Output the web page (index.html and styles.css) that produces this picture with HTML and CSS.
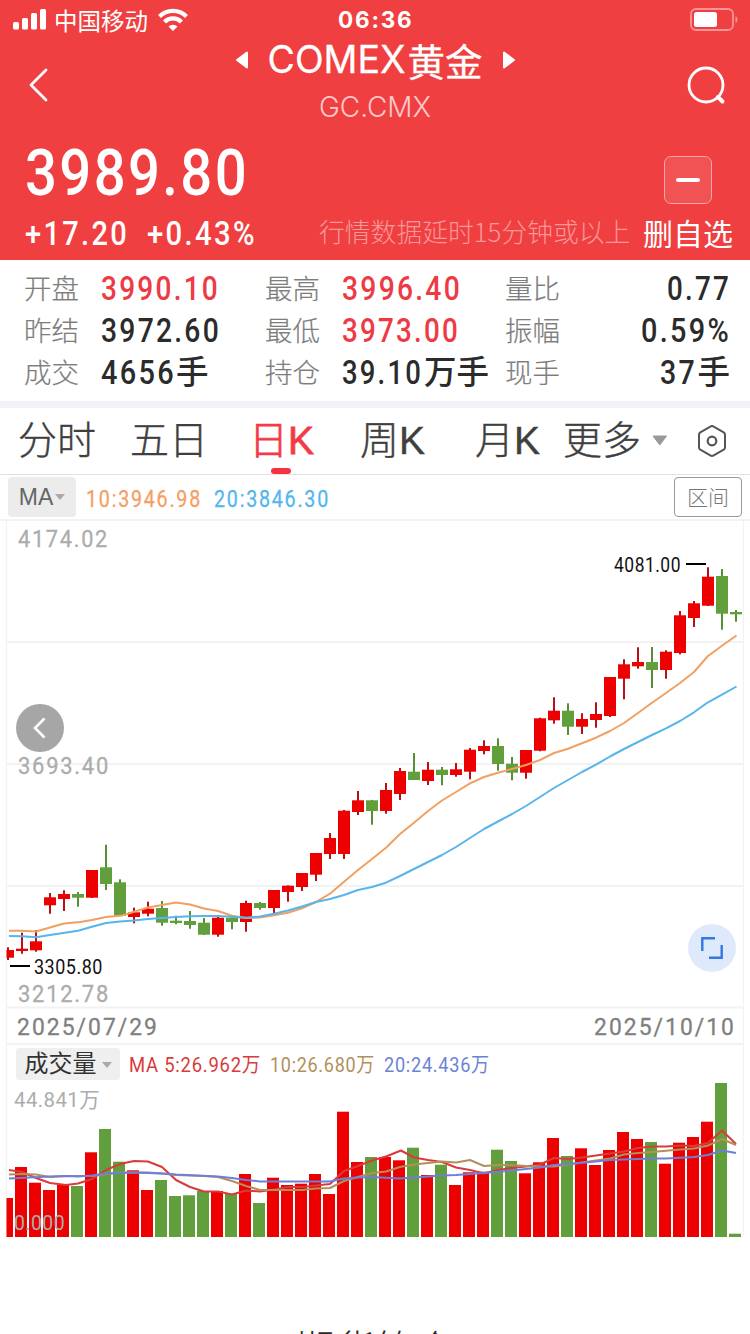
FILE: index.html
```html
<!DOCTYPE html>
<html lang="zh-CN">
<head>
<meta charset="utf-8">
<title>COMEX黄金</title>
<link rel="stylesheet" href="styles.css">
</head>
<body>
<header class="head">
  <div class="status">
    <svg class="signal" width="34" height="22"><rect x="0" y="13" width="6" height="7.500" rx="1.500"/><rect x="9" y="9" width="6" height="11.500" rx="1.500"/><rect x="18" y="4" width="6" height="16.500" rx="1.500"/><rect x="27" y="0" width="6" height="20.500" rx="1.500"/></svg>
    <span class="carrier">中国移动</span>
    <svg class="wifi" width="30" height="22" viewBox="0 0 30 22"><g fill="none" stroke="#fff" stroke-width="4.200"><path d="M1.500 7.500a19 19 0 0 1 27 0"/><path d="M6.500 13a12 12 0 0 1 17 0"/></g><path d="M10.500 17.500a6.500 6.500 0 0 1 9 0l-4.500 4.500z" fill="#fff"/></svg>
    <span class="clock">06:36</span>
    <svg class="battery" width="49" height="24"><rect x="1" y="1" width="42" height="21" rx="5" fill="none" stroke="#fff" stroke-opacity=".45" stroke-width="1.800"/><rect x="4" y="4" width="23" height="15" rx="2.500" fill="#fff"/><path d="M45.500 8v7q2-1 2-3.500t-2-3.500z" fill="#fff" fill-opacity=".45"/></svg>
  </div>
  <div class="nav">
    <svg class="back" width="20" height="34"><path d="M17 2L2 17l15 15" fill="none" stroke="#fff" stroke-width="2.800" stroke-linecap="round" stroke-linejoin="round"/></svg>
    <div class="names">
      <div class="title">
        <svg width="14" height="20"><path d="M12 2.500v15L2 10z" class="tri"/></svg>
        <span class="name"><span class="latin">COMEX</span>黄金</span>
        <svg width="14" height="20"><path d="M2 2.500v15l10-7.500z" class="tri"/></svg>
      </div>
      <div class="code">GC.CMX</div>
    </div>
    <svg class="search" width="40" height="42"><circle cx="19" cy="20" r="17" /><path d="M31 32l4.500 4.500"/></svg>
  </div>
  <div class="quote">
    <svg class="num" width="222" height="60"><text x="0" y="54.500" textLength="224" lengthAdjust="spacingAndGlyphs" class="price">3989.80</text></svg>
    <div class="minus"><i></i></div>
  </div>
  <div class="change">
    <svg class="num" width="103" height="40"><text y="32" textLength="104" lengthAdjust="spacingAndGlyphs">+17.20</text></svg>
    <svg class="num pct" width="110" height="40"><text y="32" textLength="110" lengthAdjust="spacingAndGlyphs">+0.43%</text></svg>
    <span class="delay">行情数据延时15分钟或以上</span>
    <span class="remove">删自选</span>
  </div>
</header>

<section class="stats">
  <span class="lab">开盘</span><svg class="num up" width="119" height="42"><text y="33" textLength="119" lengthAdjust="spacingAndGlyphs">3990.10</text></svg>
  <span class="lab">最高</span><svg class="num up" width="120" height="42"><text y="33" textLength="120" lengthAdjust="spacingAndGlyphs">3996.40</text></svg>
  <span class="lab">量比</span><div class="right"><svg class="num" width="63" height="42"><text y="33" textLength="64" lengthAdjust="spacingAndGlyphs">0.77</text></svg></div>
  <span class="lab">昨结</span><svg class="num" width="120" height="42"><text y="33" textLength="120" lengthAdjust="spacingAndGlyphs">3972.60</text></svg>
  <span class="lab">最低</span><svg class="num up" width="118" height="42"><text y="33" textLength="118" lengthAdjust="spacingAndGlyphs">3973.00</text></svg>
  <span class="lab">振幅</span><div class="right"><svg class="num" width="89" height="42"><text y="33" textLength="90" lengthAdjust="spacingAndGlyphs">0.59%</text></svg></div>
  <span class="lab">成交</span><div class="mix"><svg class="num" width="75" height="42"><text y="33" textLength="75" lengthAdjust="spacingAndGlyphs">4656</text></svg><b>手</b></div>
  <span class="lab">持仓</span><div class="mix"><svg class="num" width="82" height="42"><text y="33" textLength="81" lengthAdjust="spacingAndGlyphs">39.10</text></svg><b>万手</b></div>
  <span class="lab">现手</span><div class="right mix"><svg class="num" width="37" height="42"><text y="33" textLength="37" lengthAdjust="spacingAndGlyphs">37</text></svg><b>手</b></div>
</section>

<nav class="tabs">
  <span>分时</span><span>五日</span><span class="on">日K</span><span>周K</span><span>月K</span><span>更多</span>
  <svg width="16" height="12"><path d="M1 1h13.500L7.800 10z" fill="#999" stroke="#999" stroke-linejoin="round"/></svg>
  <svg width="32" height="34"><path d="M14.300 2.600q1.700-1 3.400 0l10 5.800q1.300.8 1.300 2.400v12.400q0 1.600-1.300 2.400l-10 5.800q-1.700 1-3.400 0l-10-5.800Q3 24.800 3 23.200V10.800q0-1.600 1.300-2.400z" fill="none" stroke="#555" stroke-width="2"/><circle cx="16" cy="17" r="4.300" fill="none" stroke="#555" stroke-width="2.200"/></svg>
</nav>

<section class="tools">
  <div class="pill">MA<svg width="10" height="6"><path d="M0 0h10L5 6z" fill="#aaa"/></svg></div>
  <svg class="num s o" width="116" height="40"><text y="30" textLength="116" lengthAdjust="spacingAndGlyphs">10:3946.98</text></svg>
  <svg class="num s b" width="116" height="40"><text y="30" textLength="116" lengthAdjust="spacingAndGlyphs">20:3846.30</text></svg>
  <div class="range">区间</div>
</section>

<section class="kline"><svg id="kline" width="750" height="487" viewBox="0 521 750 487"></svg></section>

<section class="dates">
  <svg class="num s d" width="142" height="34"><text y="27" textLength="142" lengthAdjust="spacingAndGlyphs">2025/07/29</text></svg>
  <svg class="num s d" width="142" height="34"><text y="27" textLength="142" lengthAdjust="spacingAndGlyphs">2025/10/10</text></svg>
</section>

<section class="volhead">
  <div class="pill vol">成交量<svg width="10" height="6"><path d="M0 0h10L5 6z" fill="#aaa"/></svg></div>
  <svg class="num t ma5" width="132" height="34"><text y="24" textLength="132" lengthAdjust="spacingAndGlyphs">MA 5:26.962万</text></svg>
  <svg class="num t ma10" width="105" height="34"><text y="24" textLength="105" lengthAdjust="spacingAndGlyphs">10:26.680万</text></svg>
  <svg class="num t ma20" width="106" height="34"><text y="24" textLength="106" lengthAdjust="spacingAndGlyphs">20:24.436万</text></svg>
</section>

<section class="volume"><svg id="volume" width="750" height="160" viewBox="0 1080 750 160"></svg></section>
<footer class="foot">期货简介</footer>
<script src="chart.js"></script>
</body>
</html>
```
FILE: styles.css
```css
* { box-sizing: border-box; }
html, body { margin: 0; height: 1334px; overflow: hidden; }
body { background: #fff; font-family: "Liberation Sans", "Noto Sans CJK SC", sans-serif; color: #2b2b2b; width: 750px; }
svg { display: block; flex: none; overflow: visible; }

.head { background: #f03f41; color: #fff; height: 260px; }
.status { display: flex; height: 40px; padding-left: 13px; }
.signal { margin-top: 9px; fill: #fff; }
.carrier { font: 400 23.500px/40px "Noto Sans CJK SC", sans-serif; margin-left: 7px; width: 96px; white-space: nowrap; }
.wifi { margin: 9px 0 0 8px; }
.clock { font: 700 22.500px/40px Inter, sans-serif; margin-left: 150px; width: 77px; letter-spacing: 1.800px; white-space: nowrap; }
.battery { margin: 8px 0 0 275px; }
.nav { display: flex; height: 90px; padding: 0 25px 0 29px; justify-content: space-between; }
.back { margin-top: 28px; }
.names { width: 500px; margin-left: 26px; }
.title { display: flex; align-items: center; justify-content: center; height: 40px; gap: 19px; margin-right: 12px; }
.tri { fill: #fff; stroke: #fff; stroke-width: 2; stroke-linejoin: round; }
.name { font: 400 37.500px/37px "Noto Sans CJK SC", sans-serif; white-space: nowrap; display: flex; -webkit-text-stroke: .3px currentColor; }
.latin { font: 400 37.500px/38px Inter, sans-serif; width: 140px; }
.code { font: 300 28px/54px Inter, sans-serif; text-align: center; margin-right: 12px; color: #fbc9c9; }
.search { margin-top: 25px; margin-right: -2px; fill: none; stroke: #fff; stroke-width: 2.800; stroke-linecap: round; }
.search path { stroke-width: 4; }
.num { font: 500 34px Roboto, "Noto Sans CJK SC", sans-serif; fill: currentColor; letter-spacing: .08em; white-space: pre; }
.quote { display: flex; justify-content: space-between; height: 80px; padding: 10px 38px 0 25px; }
.num .price { font-size: 64px; }
.minus { width: 48px; height: 48px; margin-top: 16px; border: 1px solid #f8a6a7; border-radius: 7px; background: #f15355; display: flex; align-items: center; justify-content: center; }
.minus i { width: 24px; height: 3.500px; border-radius: 2px; background: #fff; }
.change { display: flex; height: 50px; padding-left: 25px; }
.change .num { margin-top: 3px; }
.change .pct { margin-left: 19px; }
.delay { font: 300 25.800px/41px "Noto Sans CJK SC", sans-serif; color: #f79899; margin-left: 62px; width: 311px; white-space: nowrap; }
.remove { font: 400 30px/44px "Noto Sans CJK SC", sans-serif; margin-left: 13px; white-space: nowrap; }

.stats { display: grid; grid-template-columns: 76px 165px 76px 164px 90px 134px; grid-auto-rows: 42px; padding: 7px 0 0 25px; height: 141px; }
.lab { font: 300 27.500px/40px "Noto Sans CJK SC", sans-serif; color: #7d7d7d; -webkit-text-stroke: .2px currentColor; margin-left: -1px; }
.up { color: #ee3a45; }
.right { display: flex; justify-content: flex-end; }
.mix { display: flex; white-space: nowrap; }
.mix b { font: 500 32.500px/38px "Noto Sans CJK SC", sans-serif; }

.tabs { display: grid; grid-template-columns: 112px 119px 111px 115px 88px 89px 44px 34px; align-items: center; height: 74px; padding-left: 18px; border-top: 7px solid #f2f3f7; border-bottom: 1px solid #e2e2e2; font: 300 39px/66px "Liberation Sans", "Noto Sans CJK SC", sans-serif; color: #3f3f3f; white-space: nowrap; -webkit-text-stroke: .4px currentColor; }
.on { color: #f23b47; position: relative; -webkit-text-stroke: .8px currentColor; }
.on::after { content: ""; position: absolute; left: 22px; bottom: 0; width: 20px; height: 6px; border-radius: 3px; background: #f5333f; }

.tools { display: flex; height: 46px; padding: 2px 8px 0; border-bottom: 2px solid #f3f3f3; }
.pill { display: flex; align-items: center; justify-content: center; gap: 2px; width: 68px; height: 40px; border-radius: 4px; background: #ececec; color: #666; font: 400 23px/46px "Liberation Sans", sans-serif; }
.num.s { font-size: 24px; font-weight: 400; letter-spacing: .09em; stroke: currentColor; stroke-width: .3px; }
.o { color: #f4a065; margin-left: 10px; }
.b { color: #55b6ee; margin-left: 12px; }
.range { margin-left: auto; width: 68px; height: 40px; border: 1px solid #999; border-radius: 4px; text-align: center; font: 300 21px/37px "Noto Sans CJK SC", sans-serif; color: #777; }

.kline { height: 487px; }
.dates { display: flex; justify-content: space-between; height: 37px; padding: 0 14px 0 17px; color: #808080; }
.volhead { display: flex; height: 35px; padding-left: 16px; }
.pill.vol { width: 104px; height: 32px; margin-top: 3px; gap: 5px; font: 400 24px/28px "Noto Sans CJK SC", sans-serif; background: #efefef; color: #333; align-items: flex-start; }
.pill.vol svg { margin-top: 14px; }
.num.t { font-size: 20px; font-weight: 400; margin: 3px 0 0 9px; letter-spacing: .04em; }
.ma5 { color: #d93a3a; }
.ma10 { color: #b28f5c; }
.ma20 { color: #6a83d6; }
.volume { height: 160px; }
.foot { margin-top: 83px; text-align: center; font: 300 40px/48px "Noto Sans CJK SC", sans-serif; }

.red { fill: #ec0000; }
.green { fill: #609f3c; }
.wred { fill: #b80f18; }
.wgreen { fill: #578f36; }
.grid { stroke: #f2f2f2; stroke-width: 2; fill: none; }
.line { fill: none; stroke-width: 2; stroke-linejoin: round; }
.axis { font: 400 24px Roboto, "Noto Sans CJK SC", sans-serif; letter-spacing: .08em; fill: #acacac; stroke: #acacac; stroke-width: .3px; }
.axis.small { font-size: 21px; letter-spacing: .02em; stroke: none; }
.mark { font: 400 20px Roboto, sans-serif; fill: #111; letter-spacing: .03em; }
```
FILE: chart.js
```js
// Each candle: colour, body top, body bottom, wick top, wick bottom, volume bar top
const rows = `r 950 957.7 947.3 960 1198
r 948.7 951 932.7 953.7 1167
r 941.3 950.3 930 951.7 1182.7
r 897.3 905.3 893 913.7 1190
r 894 899 890.3 911 1184.7
g 894 897.7 892 906.7 1186
r 870 897.7 870 898 1152.3
g 867.3 884 844.7 890 1129
g 882.3 915.7 879.3 916 1161.7
r 912.3 917 907.7 923.3 1170.3
r 908.7 913.7 901.7 916.3 1190
g 908 922.7 901 925.7 1180
g 920.7 923 915.7 924.3 1196
g 921 925 911 928.7 1195.3
g 922.7 934.7 918 935 1191
r 917.7 934.7 916.7 936.7 1191
g 917.7 922 916.7 929.3 1194
r 903 922 900.7 931.7 1174
g 903 908 902 909.7 1203
r 890 908 890 913.3 1177.7
r 885.7 892 885.3 901.7 1185
r 873 887 873 891 1183.7
r 853 874.7 853 881 1174
r 838 854 833 859 1194
r 810.7 854 810 859 1111.7
r 800.3 812 791 815 1162
g 800.3 811 800 824.7 1157
r 790 811 783 813.7 1157
r 771 794 768 800 1160.3
g 771.7 780 753 780 1147.7
r 769.7 781 762 785 1175
g 769.7 775 767 785.3 1164.7
r 769.3 775 763 776.7 1185
r 749.7 771.7 748 779.3 1172.3
r 746 751 740.3 754.3 1171.7
g 746 764 738.3 770.7 1149.7
g 763.7 772.7 757 780.3 1161
r 750 772.7 750 778.7 1173.3
r 718.3 750.7 717.7 751.3 1162.3
r 710.7 720.3 697.3 723.7 1138
g 710.7 726.7 703.3 735 1156
r 719 726.7 713.3 734 1148.3
r 714 720 702.3 727.7 1165
r 677 716 677 717 1150
r 664.3 678.7 659.3 699.3 1132
r 662 666.3 647.3 668.7 1139
g 662 670 647 688 1142
r 651.7 670 650.3 678.7 1163.7
r 615.3 653 611 654.3 1142.7
r 603.3 618 601 627 1137
r 576.7 605.7 567.3 606 1121.7
g 576 613.7 569 629.7 1083
g 612 614.3 610 621.7 1233.7`.split("\n").map(l => l.split(" "));

const line = (pts, color) => `<polyline class="line" stroke="${color}" points="${pts}"/>`;
const rect = (cls, x, y, w, h) => `<rect class="${cls}" x="${x}" y="${y}" width="${w}" height="${h}"/>`;

let k = `<path class="grid" d="M7 642H743M7 764H743M7 886H743M7 1007.5H743M7 1044H743"/>
<path class="grid" style="stroke-width:1.2" d="M6.5 521V1237M743.5 521V1237"/>
<text class="axis" x="18" y="774" textLength="92" lengthAdjust="spacingAndGlyphs">3693.40</text>
<text class="axis" x="18" y="546.500" textLength="91" lengthAdjust="spacingAndGlyphs">4174.02</text>
<text class="axis" x="18" y="1001.500" textLength="92" lengthAdjust="spacingAndGlyphs">3212.78</text>`;
let v = "";
rows.forEach(([c, t, b, wt, wb, vt], i) => {
  const name = c === "r" ? "red" : "green", x = 8 + 14 * i;
  k += rect("w" + name, x - 1, wt, 2, wb - wt);
  const bx = Math.max(x - 6, 6.5);
  k += rect(name, bx, t, x + 6 - bx, b - t);
  const vx = Math.max(x - 7, 6.5);
  v += rect(name, vx, vt, x + 5 - vx, 1237 - vt);
});
k += line("9,930.7 22,930.8 36,931.5 50,927.5 64,923.5 80,922 92,920 106,917 122,915.5 134,911.7 148,907.5 162,905 176,902.5 190,904.5 204,908.5 218,911 232,915.7 246,918 260,917.5 274,915.3 288,912.7 302,908.3 316,902 330,893.7 344,881.7 358,870 372,859 386,847.7 400,834 414,822.7 428,811 442,800.5 456,792 470,783.3 484,777 498,772.7 512,769 526,765 540,760 554,753 568,748.7 582,743.3 596,737.7 610,731 624,723 638,713 652,702.7 666,693 680,683 694,672 708,656 722,645.7 736.500,635.500", "#f0a062");
k += line("9,936 22,936.3 36,937.3 50,935 78,930.7 92,926.7 106,923 120,921.5 134,920.5 148,919 162,918 176,917 190,916.3 204,916 218,916 232,916.7 246,917.7 260,916.5 274,913.7 288,910.5 302,906.5 316,902 330,899 344,895 358,890 372,887 386,882.7 400,876 414,869 428,862 442,855 456,847 470,838 484,829 498,821.5 512,814 526,806 540,797 554,788 568,780 582,772 596,764.7 610,756.5 624,749 638,742 652,735 666,728.3 680,721 694,712.3 708,702.3 722,694.7 736.5,686.5", "#57b5ec");
k += `<path d="M686 564h20M10 966h20" stroke="#000" stroke-width="2"/>
<text class="mark" x="614" y="572" textLength="67" lengthAdjust="spacingAndGlyphs">4081.00</text>
<text class="mark" x="34" y="974" textLength="69" lengthAdjust="spacingAndGlyphs">3305.80</text>
<circle cx="40" cy="728" r="24" fill="#a6a6a6"/><path d="M44.500 718.500L35 728l9.500 9.500" fill="none" stroke="#fff" stroke-width="2.600"/>
<circle cx="712" cy="948" r="24" fill="#dfe9fc"/><path d="M702.300 951V938.300H715M721.700 945v12.700H709" fill="none" stroke="#3477e2" stroke-width="2.400"/>`;
v += `<text class="axis small" x="14" y="1106.500" textLength="86" lengthAdjust="spacingAndGlyphs">44.841万</text>
<text class="axis small" x="14" y="1230" textLength="51" lengthAdjust="spacingAndGlyphs">0.000</text>`;
v += line("9,1170 22,1172 36,1178 50,1183 66,1185 78,1183.5 92,1179 106,1170 120,1164 134,1161 148,1161.5 162,1167 176,1180 190,1187 204,1191.5 218,1191.5 232,1194.5 246,1190.5 260,1191.5 274,1189.5 288,1187 302,1187 316,1185.5 330,1184 344,1171 358,1166 372,1160.5 386,1156.5 401,1150.5 414,1157.5 428,1160 442,1162 456,1167.5 470,1170 484,1173.5 498,1170 512,1168 526,1166.5 540,1164.5 554,1158 568,1159 582,1157.5 596,1155.5 610,1153.5 624,1151.5 638,1148 652,1146.5 666,1146.5 680,1145.5 694,1146 708,1143 722,1130.5 736,1144", "#d93a3a");
v += line("9,1174.5 22,1174 36,1174.5 50,1177 66,1176 92,1176 106,1174 120,1172.5 148,1172.5 162,1173.5 176,1175 204,1176 218,1177 232,1181 246,1186 260,1190 274,1190 302,1190 316,1188.5 330,1188 344,1181 358,1177 372,1173 386,1171.5 400,1167 414,1164.5 428,1163 442,1161.5 456,1162.5 470,1160 484,1166 498,1165 512,1165 526,1166 540,1166.5 554,1166.5 568,1164.5 582,1162.5 596,1160.5 610,1158.5 624,1154.5 638,1153 652,1152 680,1149.5 694,1148.5 708,1145.5 722,1139 736,1145", "#b28f5c");
v += line("9,1178.5 50,1176.5 66,1176 78,1176.5 92,1175.5 106,1173.5 134,1172.5 162,1173.5 176,1174.5 218,1176.5 232,1178 246,1180 260,1181.5 302,1181.5 330,1181.5 344,1178.5 358,1177.5 372,1177 400,1178.5 428,1176.5 442,1175.5 456,1175 484,1173 512,1170.5 526,1169 540,1167.5 554,1165 568,1164 596,1161.5 610,1160 624,1159.5 652,1158.5 666,1158.5 694,1157 708,1155 722,1150.5 736,1153", "#6d7fd8");
document.getElementById("kline").innerHTML = k;
document.getElementById("volume").innerHTML = v;
```
